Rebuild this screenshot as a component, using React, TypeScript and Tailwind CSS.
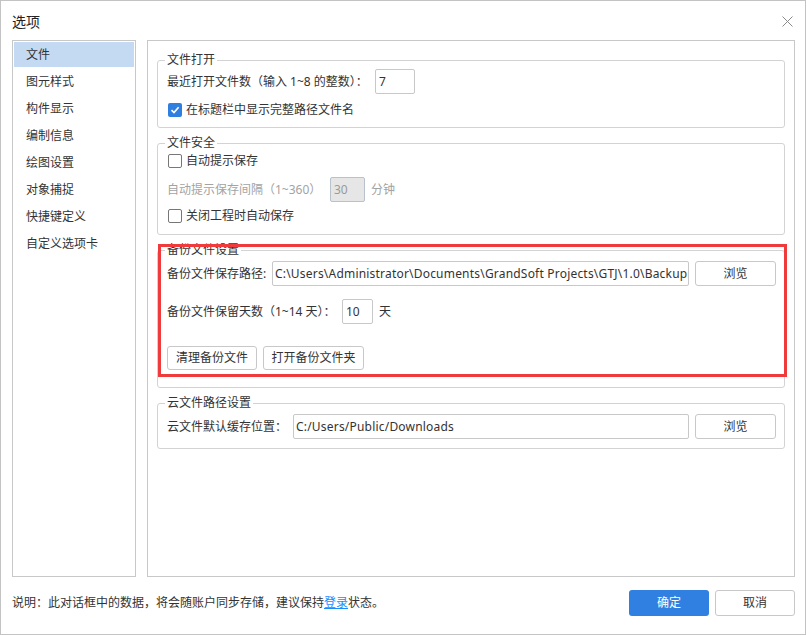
import React from "react";

function CheckBox({ checked }: { checked?: boolean }) {
  if (checked) {
    return (
      <span className="w-[14px] h-[14px] rounded-[2px] bg-[#2f7fe0] flex items-center justify-center shrink-0">
        <svg width="10" height="10" viewBox="0 0 10 10">
          <polyline points="1.5,5.2 4,7.6 8.6,2.2" fill="none" stroke="#ffffff" strokeWidth="1.6" />
        </svg>
      </span>
    );
  }
  return <span className="w-[14px] h-[14px] rounded-[2px] border border-[#777777] bg-white shrink-0" />;
}

function Btn({ children, w = "w-[81px]", h = "h-[25px]" }: { children: React.ReactNode; w?: string; h?: string }) {
  return (
    <button className={`${w} ${h} border border-[#c8c8c8] rounded-[3px] bg-white text-[12px] text-[#333] flex items-center justify-center shrink-0`}>
      {children}
    </button>
  );
}

const navItems = ["文件", "图元样式", "构件显示", "编制信息", "绘图设置", "对象捕捉", "快捷键定义", "自定义选项卡"];

export default function App() {
  return (
    <div className="w-[806px] h-[635px] relative bg-white border border-[#c3c3c3] flex flex-col text-[12px] leading-[16px] text-[#333] font-['Noto_Sans','Noto_Sans_CJK_SC',sans-serif]">
      {/* Title bar */}
      <div className="h-[39px] flex items-center justify-between pl-[11px] pr-[12px] shrink-0">
        <span className="text-[14px] text-[#222] pt-[2px]">选项</span>
        <svg width="11" height="11" viewBox="0 0 11 11" className="mt-[2px]">
          <line x1="0.5" y1="0.5" x2="10.5" y2="10.5" stroke="#8a8a8a" strokeWidth="1" />
          <line x1="10.5" y1="0.5" x2="0.5" y2="10.5" stroke="#8a8a8a" strokeWidth="1" />
        </svg>
      </div>

      {/* Main */}
      <div className="flex pl-[11px] shrink-0">
        <div className="w-[124px] h-[537px] border border-[#c8c8c8] p-[1px] flex flex-col gap-[2px]">
          {navItems.map((t, i) => (
            <div
              key={t}
              className={`h-[25px] pl-[12px] flex items-center ${i === 0 ? "bg-[#c4daf2]" : ""}`}
            >
              {t}
            </div>
          ))}
        </div>

        <div className="ml-[11px] w-[648px] h-[537px] border border-[#c8c8c8] pl-[9px] pr-[9px] pt-[11px]">
          {/* 文件打开 */}
          <fieldset className="border border-[#d3d3d3] rounded-[3px] pl-[9px] pr-[8px] pt-[1px] pb-[9px]">
            <legend className="px-[2px] -ml-[2px] leading-[16px]">文件打开</legend>
            <div className="flex items-center h-[25px]">
              <span className="w-[208px] whitespace-nowrap">最近打开文件数（输入 1~8 的整数）：</span>
              <div className="w-[40px] h-[25px] border border-[#c8c8c8] rounded-[2px] flex items-center pl-[3px]">7</div>
            </div>
            <div className="flex items-center h-[16px] mt-[8px] gap-[4px] pl-[1px]">
              <CheckBox checked />
              <span>在标题栏中显示完整路径文件名</span>
            </div>
          </fieldset>

          {/* 文件安全 */}
          <fieldset className="mt-[7px] border border-[#d3d3d3] rounded-[3px] pl-[9px] pr-[8px] pt-[2px] pb-[10px]">
            <legend className="px-[2px] -ml-[2px] leading-[16px]">文件安全</legend>
            <div className="flex items-center h-[16px] gap-[4px] pl-[1px]">
              <CheckBox />
              <span>自动提示保存</span>
            </div>
            <div className="flex items-center h-[25px] mt-[8px]">
              <span className="w-[163px] whitespace-nowrap text-[#a3a3a3]">自动提示保存间隔（1~360）</span>
              <div className="w-[35px] h-[25px] border border-[#b9c1cc] rounded-[2px] bg-[#e6e6e6] text-[#9a9a9a] flex items-center pl-[3px]">30</div>
              <span className="ml-[6px] text-[#a3a3a3]">分钟</span>
            </div>
            <div className="flex items-center h-[16px] mt-[6px] gap-[4px] pl-[1px]">
              <CheckBox />
              <span>关闭工程时自动保存</span>
            </div>
          </fieldset>

          {/* 备份文件设置 */}
          <fieldset className="mt-[7px] border border-[#d3d3d3] rounded-[3px] pl-[9px] pr-[8px] pt-[3px] pb-[17px]">
            <legend className="px-[2px] -ml-[2px] leading-[16px]">备份文件设置</legend>
            <div className="flex items-center h-[25px]">
              <span className="w-[105px] whitespace-nowrap">备份文件保存路径:</span>
              <div className="flex-1 min-w-0 h-[25px] border border-[#c8c8c8] rounded-[2px] flex items-center pl-[2px] overflow-hidden whitespace-nowrap tracking-[0.2px]">
                C:\Users\Administrator\Documents\GrandSoft Projects\GTJ\1.0\Backup
              </div>
              <div className="ml-[6px]">
                <Btn>浏览</Btn>
              </div>
            </div>
            <div className="flex items-center h-[25px] mt-[13px]">
              <span className="w-[175px] whitespace-nowrap">备份文件保留天数（1~14 天）：</span>
              <div className="w-[31px] h-[25px] border border-[#c8c8c8] rounded-[2px] flex items-center pl-[3px]">10</div>
              <span className="ml-[6px]">天</span>
            </div>
            <div className="flex items-center mt-[22px] gap-[6px]">
              <Btn w="w-[90px]" h="h-[24px]">清理备份文件</Btn>
              <Btn w="w-[101px]" h="h-[24px]">打开备份文件夹</Btn>
            </div>
          </fieldset>

          {/* 云文件路径设置 */}
          <fieldset className="mt-[7px] border border-[#d3d3d3] rounded-[3px] pl-[9px] pr-[8px] pt-[3px] pb-[9px]">
            <legend className="px-[2px] -ml-[2px] leading-[16px]">云文件路径设置</legend>
            <div className="flex items-center h-[25px]">
              <span className="w-[126px] whitespace-nowrap">云文件默认缓存位置：</span>
              <div className="flex-1 min-w-0 h-[25px] border border-[#c8c8c8] rounded-[2px] flex items-center pl-[2px] overflow-hidden whitespace-nowrap tracking-[0.2px]">
                C:/Users/Public/Downloads
              </div>
              <div className="ml-[6px]">
                <Btn>浏览</Btn>
              </div>
            </div>
          </fieldset>
        </div>
      </div>

      {/* Footer */}
      <div className="flex items-center h-[26px] mt-[13px] pl-[11px] pr-[10px]">
        <span className="whitespace-nowrap">
          说明：此对话框中的数据，将会随账户同步存储，建议保持
          <span className="text-[#1a8cff] underline">登录</span>
          状态。
        </span>
        <div className="ml-auto flex gap-[6px]">
          <button className="w-[80px] h-[26px] rounded-[3px] bg-[#2f80e0] text-white text-[12px] flex items-center justify-center">
            确定
          </button>
          <button className="w-[80px] h-[26px] rounded-[3px] border border-[#c8c8c8] bg-white text-[12px] text-[#333] flex items-center justify-center">
            取消
          </button>
        </div>
      </div>

      {/* Red annotation box */}
      <div className="absolute left-[157px] top-[243px] w-[629px] h-[133px] border-[3px] border-[#ef3b3b] pointer-events-none" />
    </div>
  );
}
